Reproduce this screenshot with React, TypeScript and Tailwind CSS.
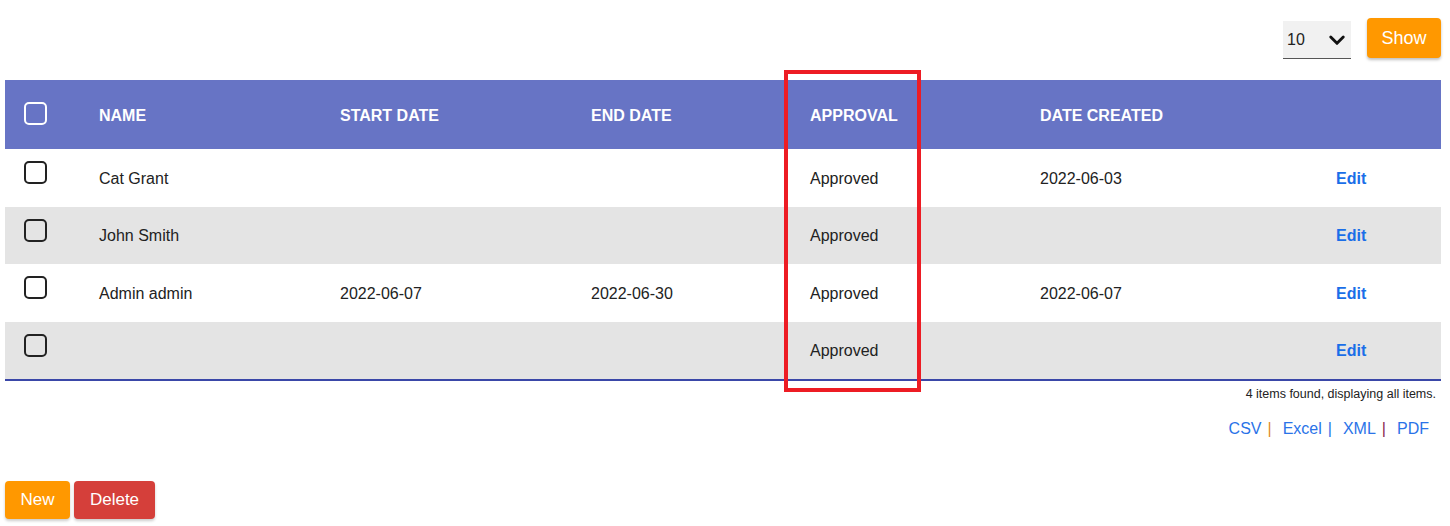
import React from "react";

const rows = [
  { name: "Cat Grant", start: "", end: "", approval: "Approved", created: "2022-06-03" },
  { name: "John Smith", start: "", end: "", approval: "Approved", created: "" },
  { name: "Admin admin", start: "2022-06-07", end: "2022-06-30", approval: "Approved", created: "2022-06-07" },
  { name: "", start: "", end: "", approval: "Approved", created: "" },
];

const cols = "grid grid-cols-[75px_241px_251px_219px_230px_296px_1fr]";

function Box({ light }: { light?: boolean }) {
  return (
    <div
      className={
        "w-[23px] h-[23px] rounded-[5px] border-2 " +
        (light ? "border-white" : "border-[#222222]")
      }
    />
  );
}

export default function App() {
  return (
    <div className="relative w-[1450px] h-[526px] bg-white text-[#222222] font-['Liberation_Sans',Arial,sans-serif]">
      <div className="flex justify-end items-center gap-4 pt-[18px] pr-[9px] h-[58px]">
        <div className="w-[68px] h-[38px] mt-[4px] bg-[#f1f1f1] border-b border-[#555555] flex items-center justify-between pl-[4px] pr-[4px] text-[16px] text-[#222]">
          <span className="pt-[1px]">10</span>
          <svg width="20" height="20" viewBox="0 0 24 24" fill="none" stroke="#111" strokeWidth="3.5" strokeLinecap="round" strokeLinejoin="round">
            <path d="M4.5 8.5l7.5 7.5 7.5-7.5" />
          </svg>
        </div>
        <button className="w-[74px] h-[40px] rounded-[4px] bg-[#ff9800] text-white text-[18px] shadow-[0_2px_3px_rgba(0,0,0,0.25)]">
          Show
        </button>
      </div>

      <div className="mx-[5px] mt-[22px] w-[1436px] border-b-2 border-[#3a47a8]">
        <div className={cols + " h-[69px] bg-[#6774c5] text-white font-bold text-[16px] items-center"}>
          <div className="pl-[19px] pb-[2px]"><Box light /></div>
          <div className="pl-[19px] pt-[2px]">NAME</div>
          <div className="pl-[19px] pt-[2px]">START DATE</div>
          <div className="pl-[19px] pt-[2px]">END DATE</div>
          <div className="pl-[19px] pt-[2px]">APPROVAL</div>
          <div className="pl-[19px] pt-[2px]">DATE CREATED</div>
          <div />
        </div>
        {rows.map((r, i) => (
          <div
            key={i}
            className={cols + " h-[57.5px] items-center text-[16px] " + (i % 2 === 1 ? "bg-[#e4e4e4]" : "bg-white")}
          >
            <div className="pl-[19px] pb-[10px]"><Box /></div>
            <div className="pl-[19px] pt-[2px]">{r.name}</div>
            <div className="pl-[19px] pt-[2px]">{r.start}</div>
            <div className="pl-[19px] pt-[2px]">{r.end}</div>
            <div className="pl-[19px] pt-[2px]">{r.approval}</div>
            <div className="pl-[19px] pt-[2px]">{r.created}</div>
            <div className="pl-[19px] pt-[2px] font-bold text-[#1a6ee8]">Edit</div>
          </div>
        ))}
      </div>

      <div className="flex justify-end pr-[14px] pt-[4px] text-[12.5px] text-[#222]">
        4 items found, displaying all items.
      </div>
      <div className="flex justify-end pr-[21px] pt-[13px] text-[16px] text-[#2a73e8] gap-[6px]">
        <span>CSV</span>
        <span className="text-[#e08a1e]">|</span>
        <span className="ml-[5px]">Excel</span>
        <span>|</span>
        <span className="ml-[5px]">XML</span>
        <span className="text-[#8a1f4f]">|</span>
        <span className="ml-[5px]">PDF</span>
      </div>

      <div className="flex gap-[4px] pl-[5px] pt-[40px]">
        <button className="w-[65px] h-[38px] rounded-[4px] bg-[#ff9800] text-white text-[17px] shadow-[0_2px_3px_rgba(0,0,0,0.2)]">
          New
        </button>
        <button className="w-[81px] h-[38px] rounded-[4px] bg-[#d53f3a] text-white text-[17px] shadow-[0_2px_3px_rgba(0,0,0,0.2)]">
          Delete
        </button>
      </div>

      <div className="absolute left-[784px] top-[70px] w-[137px] h-[322px] border-4 border-[#ed1c24] pointer-events-none" />
    </div>
  );
}
